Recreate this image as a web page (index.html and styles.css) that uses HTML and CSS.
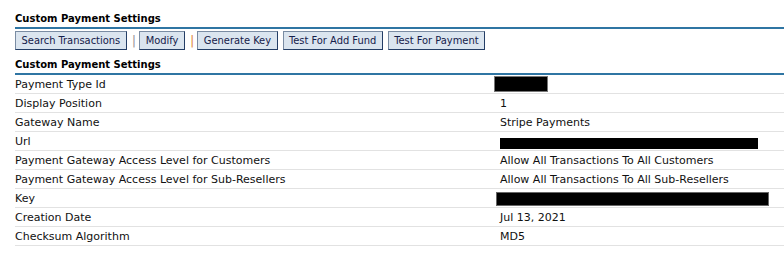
FILE: index.html
```html
<!DOCTYPE html>
<html>
<head>
<meta charset="utf-8">
<link rel="stylesheet" href="styles.css">
</head>
<body>
<div class="page">
  <div class="section-title">Custom Payment Settings</div>
  <div class="toolbar">
    <button class="btn">Search Transactions</button>
    <span class="sep sep-gray">|</span>
    <button class="btn">Modify</button>
    <span class="sep sep-orange">|</span>
    <button class="btn">Generate Key</button>
    <button class="btn">Test For Add Fund</button>
    <button class="btn">Test For Payment</button>
  </div>
  <div class="section-title">Custom Payment Settings</div>
  <div class="grid">
    <div class="row"><div class="label">Payment Type Id</div><div class="value"><span class="redact redact-id"></span></div></div>
    <div class="row"><div class="label">Display Position</div><div class="value">1</div></div>
    <div class="row"><div class="label">Gateway Name</div><div class="value">Stripe Payments</div></div>
    <div class="row"><div class="label">Url</div><div class="value"><span class="redact redact-url"></span></div></div>
    <div class="row"><div class="label">Payment Gateway Access Level for Customers</div><div class="value">Allow All Transactions To All Customers</div></div>
    <div class="row"><div class="label">Payment Gateway Access Level for Sub-Resellers</div><div class="value">Allow All Transactions To All Sub-Resellers</div></div>
    <div class="row"><div class="label">Key</div><div class="value"><span class="redact redact-key"></span></div></div>
    <div class="row"><div class="label">Creation Date</div><div class="value">Jul 13, 2021</div></div>
    <div class="row"><div class="label">Checksum Algorithm</div><div class="value">MD5</div></div>
  </div>
</div>
</body>
</html>
```

FILE: styles.css
```css
html, body {
  margin: 0;
  padding: 0;
  background: #ffffff;
}
body {
  font-family: "DejaVu Sans", Verdana, sans-serif;
  font-size: 11px;
  color: #111111;
}
.page {
  margin-left: 15px;
  padding-top: 12px;
}
.section-title {
  font-weight: bold;
  font-size: 10px;
  line-height: 14px;
  height: 14px;
  padding-bottom: 1px;
  border-bottom: 2px solid #2f75a3;
  color: #000000;
}
.toolbar {
  display: flex;
  align-items: center;
  height: 19px;
  margin-top: 2px;
  margin-bottom: 8px;
}
.btn {
  font-family: "DejaVu Sans Condensed", "DejaVu Sans", Verdana, sans-serif;
  font-stretch: condensed;
  font-size: 11px;
  height: 19px;
  line-height: 15px;
  padding: 0 5.5px;
  margin: 0 5px 0 0;
  background: #dbe5ef;
  color: #15204a;
  border: 1px solid #7a8ca3;
  border-right-color: #243e66;
  border-bottom-color: #243e66;
  border-radius: 0;
}
.sep {
  font-size: 13px;
  line-height: 19px;
  margin: 0 3px 0 0;
}
.sep-gray { color: #9a9a9a; }
.sep-orange { color: #e08a4c; }
.grid {
  display: flex;
  flex-direction: column;
}
.row {
  display: grid;
  grid-template-columns: 485px 1fr;
  height: 18px;
  border-bottom: 1px solid #e2e2e2;
  align-items: center;
}
.label, .value {
  white-space: nowrap;
  line-height: 17px;
  padding-top: 1px;
}
.redact {
  display: inline-block;
  background: #000000;
  vertical-align: middle;
}
.redact-id {
  width: 52px;
  height: 14px;
  margin-left: -6px;
  margin-top: -2px;
  border: 1px solid #777;
}
.redact-url {
  width: 258px;
  height: 11px;
  margin-top: 3px;
}
.redact-key {
  width: 271px;
  height: 12px;
  margin-left: -4px;
  margin-top: -1px;
  border: 1px solid #666;
}
```
